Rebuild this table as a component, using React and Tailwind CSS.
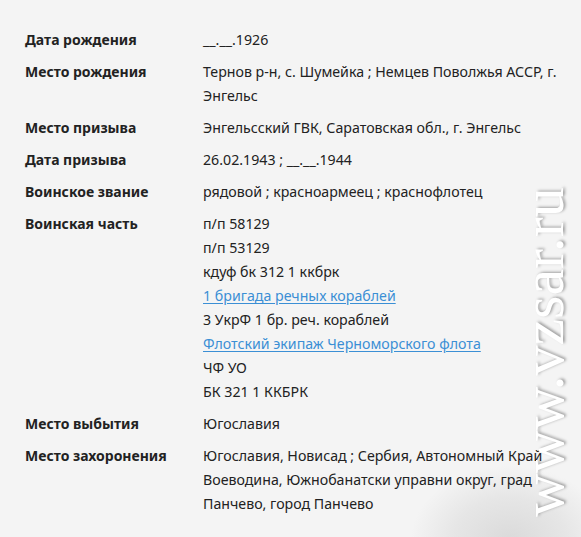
import React from "react";

const rows = [
  { label: "Дата рождения", values: ["__.__.1926"] },
  { label: "Место рождения", values: ["Тернов р-н, с. Шумейка ; Немцев Поволжья АССР, г. Энгельс"] },
  { label: "Место призыва", values: ["Энгельсский ГВК, Саратовская обл., г. Энгельс"] },
  { label: "Дата призыва", values: ["26.02.1943 ; __.__.1944"] },
  { label: "Воинское звание", values: ["рядовой ; красноармеец ; краснофлотец"] },
  {
    label: "Воинская часть",
    values: [
      "п/п 58129",
      "п/п 53129",
      "кдуф бк 312 1 ккбрк",
      { link: "1 бригада речных кораблей" },
      "3 УкрФ 1 бр. реч. кораблей",
      { link: "Флотский экипаж Черноморского флота" },
      "ЧФ УО",
      "БК 321 1 ККБРК",
    ],
  },
  { label: "Место выбытия", values: ["Югославия"] },
  {
    label: "Место захоронения",
    values: ["Югославия, Новисад ; Сербия, Автономный Край Воеводина, Южнобанатски управни округ, град Панчево, город Панчево"],
  },
];

export default function App() {
  return (
    <div
      className="relative w-[581px] h-[537px] overflow-hidden bg-[#f4f4f4] text-[#222]"
      style={{ fontFamily: '"Noto Sans", "Open Sans", sans-serif' }}
    >
      <div className="pointer-events-none absolute left-[410px] top-[465px] w-[200px] h-[150px] rounded-full bg-[radial-gradient(ellipse_at_center,#dadada_0%,#e6e6e6_40%,rgba(244,244,244,0)_70%)]" />
      <div className="relative flex flex-col gap-2 pl-[25px] pt-[28px]">
        {rows.map((r) => (
          <div key={r.label} className="flex">
            <div className="w-[178px] shrink-0 text-[14px] leading-6 font-bold">{r.label}</div>
            <div className="w-[354px] flex flex-col text-[14.2px] leading-6">
              {r.values.map((v, i) =>
                typeof v === "string" ? (
                  <div key={i}>{v}</div>
                ) : (
                  <a key={i} href="#" className="text-[#3b8fd5] underline underline-offset-2 w-fit">
                    {v.link}
                  </a>
                )
              )}
            </div>
          </div>
        ))}
      </div>
      <div
        className="pointer-events-none absolute left-[543px] top-[352px] -translate-x-1/2 -translate-y-1/2 -rotate-90 whitespace-nowrap text-[60px] leading-none text-white [text-shadow:1px_2px_3px_rgba(0,0,0,0.35)]"
        style={{ fontFamily: '"Liberation Serif", serif' }}
      >
        www.vzsar.ru
      </div>
    </div>
  );
}
